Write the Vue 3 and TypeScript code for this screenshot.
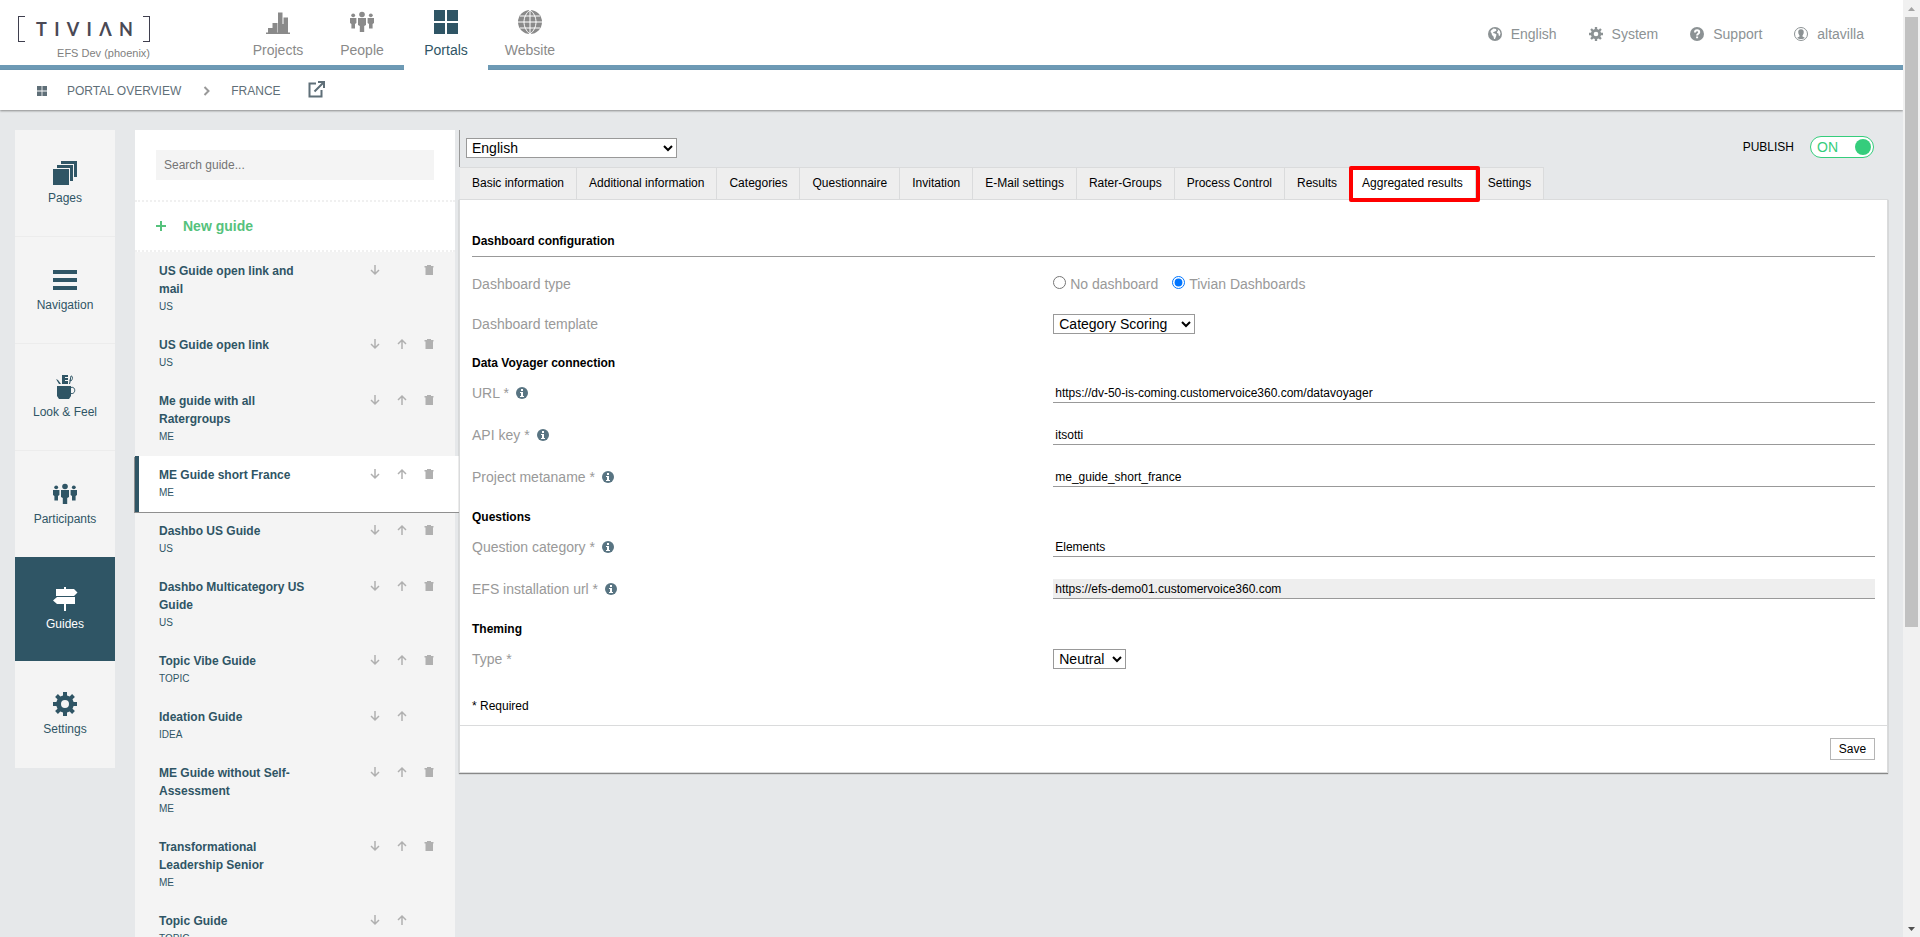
<script setup lang="ts">
import { ref } from 'vue'

interface Guide {
  title: string
  kind: string
  up: boolean
  remove: boolean
}

const mainNav = ['Projects', 'People', 'Portals', 'Website']
const sideNav = ['Pages', 'Navigation', 'Look & Feel', 'Participants', 'Guides', 'Settings']
const userNav = ['English', 'System', 'Support', 'altavilla']
const tabs = [
  'Basic information', 'Additional information', 'Categories', 'Questionnaire', 'Invitation',
  'E-Mail settings', 'Rater-Groups', 'Process Control', 'Results', 'Aggregated results', 'Settings',
]
const logoLetters = ['T', 'I', 'V', 'I', 'Λ', 'N']

const guides: Guide[] = [
  { title: 'US Guide open link and mail', kind: 'US', up: false, remove: true },
  { title: 'US Guide open link', kind: 'US', up: true, remove: true },
  { title: 'Me guide with all Ratergroups', kind: 'ME', up: true, remove: true },
  { title: 'ME Guide short France', kind: 'ME', up: true, remove: true },
  { title: 'Dashbo US Guide', kind: 'US', up: true, remove: true },
  { title: 'Dashbo Multicategory US Guide', kind: 'US', up: true, remove: true },
  { title: 'Topic Vibe Guide', kind: 'TOPIC', up: true, remove: true },
  { title: 'Ideation Guide', kind: 'IDEA', up: true, remove: false },
  { title: 'ME Guide without Self-Assessment', kind: 'ME', up: true, remove: true },
  { title: 'Transformational Leadership Senior', kind: 'ME', up: true, remove: true },
  { title: 'Topic Guide', kind: 'TOPIC', up: true, remove: false },
]

const activeGuide = ref(3)
const activeTab = ref('Aggregated results')
const search = ref('')
const published = ref(true)
const language = ref('English')
const dashboardType = ref('tivian')
const template = ref('Category Scoring')
const theme = ref('Neutral')

const connection = ref([
  { id: 'url', label: 'URL *', value: 'https://dv-50-is-coming.customervoice360.com/datavoyager', locked: false },
  { id: 'api-key', label: 'API key *', value: 'itsotti', locked: false },
  { id: 'metaname', label: 'Project metaname *', value: 'me_guide_short_france', locked: false },
])
const questions = ref([
  { id: 'category', label: 'Question category *', value: 'Elements', locked: false },
  { id: 'efs-url', label: 'EFS installation url *', value: 'https://efs-demo01.customervoice360.com', locked: true },
])
</script>

<template>
  <div class="window">
    <svg class="symbols" aria-hidden="true">
      <symbol id="people" viewBox="0 0 24 24">
        <circle cx="12" cy="4.500" r="2.800" />
        <path d="M8 8h8v7l-1.800 1v6H9.800v-6L8 15z" />
        <circle cx="3.200" cy="5.300" r="1.900" />
        <path d="M0 8h6.400v5l-1.400 1v4.500H1.400V14L0 13z" />
        <circle cx="20.800" cy="5.300" r="1.900" />
        <path d="M17.600 8H24v5l-1.400 1v4.500H19V14l-1.400-1z" />
      </symbol>
      <symbol id="gear" viewBox="0 0 24 24">
        <path fill-rule="evenodd" d="M10 0h4v3.400l2.700 1.100 2.400-2.400 2.800 2.800-2.400 2.400L20.600 10H24v4h-3.400l-1.100 2.700 2.400 2.400-2.800 2.800-2.400-2.400-2.700 1.100V24h-4v-3.400l-2.700-1.100-2.400 2.400-2.800-2.800 2.400-2.400L3.400 14H0v-4h3.400l1.100-2.700-2.400-2.400 2.800-2.800 2.400 2.400L10 3.400zM12 8a4 4 0 1 0 0 8 4 4 0 0 0 0-8z" />
      </symbol>
      <symbol id="tiles" viewBox="0 0 24 24">
        <path d="M0 0h11v11H0zM13 0h11v11H13zM0 13h11v11H0zM13 13h11v11H13z" />
      </symbol>
    </svg>

    <div class="page">
      <header class="top">
        <div class="brand">
          <div class="logo" aria-label="TIVIAN">
            <span v-for="(letter, i) in logoLetters" :key="i">{{ letter }}</span>
          </div>
          <div class="instance">EFS Dev (phoenix)</div>
        </div>
        <nav class="main-nav">
          <a v-for="item in mainNav" :key="item" href="#" :class="{ current: item === 'Portals' }">
            <svg v-if="item === 'Projects'" viewBox="0 0 24 24">
              <path d="M0 22.500h24V24H0zM2 18h4.500v5H2zM6.500 13h5v10h-5zM12 2.500h4.500V23H12zM17.500 7.500h4.500V23h-4.500zM16 14h2v9h-2z" />
            </svg>
            <svg v-else-if="item === 'People'" viewBox="0 0 24 24"><use href="#people" /></svg>
            <svg v-else-if="item === 'Portals'" viewBox="0 0 24 24"><use href="#tiles" /></svg>
            <svg v-else viewBox="0 0 24 24">
              <circle cx="12" cy="12" r="12" />
              <path class="lines" d="M12 0v24M0 12h24M2 6h20M2 18h20M12 0C4 6 4 18 12 24M12 0c8 6 8 18 0 24" />
            </svg>
            <span>{{ item }}</span>
          </a>
        </nav>
        <nav class="user-nav">
          <a v-for="item in userNav" :key="item" href="#">
            <svg v-if="item === 'English'" viewBox="0 0 14 14">
              <circle cx="7" cy="7" r="7" />
              <path class="cut" d="M3 3.500l2.500-2 2.500.500.500 1.500L7 4.500 5.500 5l-.500 1 2 .500 1.500 1-.500 2-1 2.500H6L5.500 9.500 4 8 3.500 6 2.500 5zM9.500 2l2.200 1.800.800 2.700-.800 2.500-1-.500-.200-2L9 6l.300-1.500.900-1z" />
            </svg>
            <svg v-else-if="item === 'System'" viewBox="0 0 24 24"><use href="#gear" /></svg>
            <svg v-else-if="item === 'Support'" viewBox="0 0 14 14">
              <circle cx="7" cy="7" r="7" />
              <path class="mark" d="M5 5.400C5 2.600 9.200 2.800 9.200 5.200 9.200 6.800 7.100 6.700 7.100 8.500M7.100 9.600v1.600" />
            </svg>
            <svg v-else viewBox="0 0 14 14">
              <circle class="ring" cx="7" cy="7" r="6.500" />
              <path d="M7 2.200c2.200 0 3 1.500 2.700 3.500C9.500 7 9 7.800 8.500 8.500v1l2.300 1.200C9.500 12.500 4.500 12.500 3.200 10.700l2.300-1.200v-1C5 7.800 4.500 7 4.300 5.700 4 3.700 4.800 2.200 7 2.200z" />
            </svg>
            <span>{{ item }}</span>
          </a>
        </nav>
      </header>

      <nav class="crumbs" aria-label="Breadcrumb">
        <svg class="crumb-tiles" viewBox="0 0 24 24"><use href="#tiles" /></svg>
        <a class="overview" href="#">PORTAL OVERVIEW</a>
        <svg class="chevron" viewBox="0 0 8 10"><path d="M1.500 1l4 4-4 4" /></svg>
        <a class="portal" href="#">FRANCE</a>
        <a class="external" href="#" aria-label="Open portal">
          <svg viewBox="0 0 17 17"><path d="M8 2.500H1.500v13h12V9M10 1h6v6M16 1L6.500 10.500" /></svg>
        </a>
      </nav>

      <div class="workspace">
        <nav class="side">
          <a v-for="item in sideNav" :key="item" href="#" :class="{ current: item === 'Guides' }">
            <svg v-if="item === 'Pages'" viewBox="0 0 24 24">
              <path d="M0 8h16v16H0zM4 4h16v16h-3V7H4zM8 0h16v16h-3V3H8z" />
            </svg>
            <svg v-else-if="item === 'Navigation'" viewBox="0 0 24 24">
              <path d="M0 2h24v4H0zM0 10h24v4H0zM0 18h24v4H0z" />
            </svg>
            <svg v-else-if="item === 'Look & Feel'" viewBox="0 0 24 24">
              <path d="M4 11h14v10l-2 3H6l-2-3zM9 0h6v2h-3v1h3v2h-3v1h3v3H9zM3 4l2 1 3 4H6zM16 9l1-5 1 1-1 4z" />
              <path class="thin" d="M18 12.500c5-1.500 5 7 0 6M17 6l1-5c2 0 2 3 0 5" />
            </svg>
            <svg v-else-if="item === 'Participants'" viewBox="0 0 24 24"><use href="#people" /></svg>
            <svg v-else-if="item === 'Guides'" viewBox="0 0 24 24">
              <path d="M11 0h2v2h8l3.500 3.500L21 9H3V2h8zM4 10h18v7H4L0 13.500zM11 17h2v7h-2z" />
            </svg>
            <svg v-else viewBox="0 0 24 24"><use href="#gear" /></svg>
            <span>{{ item }}</span>
          </a>
        </nav>

        <aside class="guides">
          <div class="search">
            <input v-model="search" type="text" placeholder="Search guide..." aria-label="Search guide" />
          </div>
          <button class="new-guide" type="button">
            <svg viewBox="0 0 10 10"><path d="M4 0h2v4h4v2H6v4H4V6H0V4h4z" /></svg>
            <span>New guide</span>
          </button>
          <ul>
            <li v-for="(guide, i) in guides" :key="guide.title" :class="{ active: i === activeGuide }">
              <a class="guide-link" href="#" @click.prevent="activeGuide = i">
                <strong>{{ guide.title }}</strong>
                <small>{{ guide.kind }}</small>
              </a>
              <div class="actions">
                <button type="button" aria-label="Move down">
                  <svg viewBox="0 0 10 10"><path class="arrow" d="M5 0v9M1 5l4 4 4-4" /></svg>
                </button>
                <button v-if="guide.up" type="button" aria-label="Move up">
                  <svg viewBox="0 0 10 10"><path class="arrow" d="M5 10V1M1 5l4-4 4 4" /></svg>
                </button>
                <button v-if="guide.remove" class="trash" type="button" aria-label="Delete">
                  <svg viewBox="0 0 10 10"><path d="M3 0h4v1h2.500v1.500H9V10H1.500V2.500H.500V1H3z" /></svg>
                </button>
              </div>
            </li>
          </ul>
        </aside>

        <main>
          <div class="toolbar">
            <select v-model="language" class="language" aria-label="Language">
              <option>English</option>
            </select>
            <label class="publish">
              <span>PUBLISH</span>
              <span class="toggle">
                <span>ON</span>
                <input v-model="published" type="checkbox" role="switch" />
              </span>
            </label>
          </div>
          <nav class="tabs">
            <button
              v-for="tab in tabs" :key="tab" type="button"
              :class="{ selected: tab === activeTab }" @click="activeTab = tab"
            >{{ tab }}</button>
          </nav>

          <form class="panel" @submit.prevent>
            <div class="fields">
              <h1>Dashboard configuration</h1>
              <div class="row choice">
                <span>Dashboard type</span>
                <div class="radios">
                  <label><input v-model="dashboardType" type="radio" name="type" value="none" />No dashboard</label>
                  <label><input v-model="dashboardType" type="radio" name="type" value="tivian" />Tivian Dashboards</label>
                </div>
              </div>
              <div class="row choice">
                <label for="template">Dashboard template</label>
                <select id="template" v-model="template" class="template"><option>Category Scoring</option></select>
              </div>
              <h2>Data Voyager connection</h2>
              <div v-for="field in connection" :key="field.id" class="row">
                <label :for="field.id">{{ field.label }}
                  <svg class="info" viewBox="0 0 12 12"><circle cx="6" cy="6" r="6" /><path d="M5 2h2v2H5zM4 5h3v4h1v1H4V9h1V6H4z" /></svg>
                </label>
                <input :id="field.id" v-model="field.value" type="text" />
              </div>
              <h2>Questions</h2>
              <div v-for="field in questions" :key="field.id" class="row">
                <label :for="field.id">{{ field.label }}
                  <svg class="info" viewBox="0 0 12 12"><circle cx="6" cy="6" r="6" /><path d="M5 2h2v2H5zM4 5h3v4h1v1H4V9h1V6H4z" /></svg>
                </label>
                <input :id="field.id" v-model="field.value" type="text" :readonly="field.locked" />
              </div>
              <h2>Theming</h2>
              <div class="row">
                <label for="theme">Type *</label>
                <select id="theme" v-model="theme" class="theme"><option>Neutral</option></select>
              </div>
              <p class="required">* Required</p>
            </div>
            <footer><button type="submit">Save</button></footer>
          </form>
        </main>
      </div>
    </div>

    <div class="scrollbar" aria-hidden="true">
      <svg class="up" viewBox="0 0 17 17"><path d="M5 11l3.500-4 3.500 4z" /></svg>
      <div class="track"><div class="thumb"></div></div>
      <svg class="down" viewBox="0 0 17 17"><path d="M5 7h7l-3.500 4z" /></svg>
    </div>
  </div>
</template>

<style>
body {
  margin: 0;
  background: #e6e8ea;
}
</style>

<style scoped>
* {
  box-sizing: border-box;
}
.window {
  display: flex;
  height: 100vh;
  overflow: hidden;
  font-family: "Liberation Sans", Arial, sans-serif;
  font-size: 12px;
  line-height: 16px;
  color: #000;
  background: #e6e8ea;
}
.symbols {
  position: absolute;
  width: 0;
  height: 0;
}
svg {
  display: block;
  flex: none;
  fill: currentColor;
  overflow: visible;
}
a {
  color: inherit;
  text-decoration: none;
}
button,
input,
select {
  margin: 0;
  font: inherit;
  color: inherit;
}
button {
  padding: 0;
  border: 0;
  background: none;
}
.page {
  flex: 1;
  min-width: 0;
}

/* Header */
.top {
  display: flex;
  height: 70px;
  background: linear-gradient(#6d9ab5, #6d9ab5) bottom / 100% 5px no-repeat #fff;
}
.brand {
  width: 132px;
  margin: 16px 86px 0 18px;
}
.logo {
  display: flex;
  justify-content: space-between;
  height: 26px;
  padding: 0 16px 0 17px;
  font-family: Lato, sans-serif;
  font-size: 18px;
  font-weight: bold;
  line-height: 26px;
  color: #4a4955;
  border: 1px solid #3f3f4e;
  border-width: 0 1px;
  background:
    linear-gradient(#3f3f4e, #3f3f4e) left top / 6px 1px no-repeat,
    linear-gradient(#3f3f4e, #3f3f4e) left bottom / 6px 1px no-repeat,
    linear-gradient(#3f3f4e, #3f3f4e) right top / 6px 1px no-repeat,
    linear-gradient(#3f3f4e, #3f3f4e) right bottom / 6px 1px no-repeat;
}
.instance {
  padding-top: 3px;
  font-size: 11px;
  text-align: right;
  color: #808080;
}
.main-nav {
  display: flex;
  font-size: 14px;
  color: #8a8a8a;
}
.main-nav a {
  display: flex;
  flex-direction: column;
  align-items: center;
  gap: 8px;
  width: 84px;
  height: 70px;
  padding-top: 10px;
}
.main-nav a.current {
  color: #2f5565;
  background: #fff;
}
.main-nav svg {
  width: 24px;
  height: 24px;
}
.lines {
  fill: none;
  stroke: #fff;
  stroke-width: 1;
}
.user-nav {
  display: flex;
  gap: 32px;
  height: 68px;
  margin-left: auto;
  padding-right: 39px;
  font-size: 14px;
  color: #8c9294;
}
.user-nav a {
  display: flex;
  align-items: center;
  gap: 9px;
}
.user-nav svg {
  width: 14px;
  height: 14px;
}
.cut {
  fill: #fff;
}
.mark {
  fill: none;
  stroke: #fff;
  stroke-width: 2;
}
.ring {
  fill: none;
  stroke: currentColor;
}

/* Breadcrumb */
.crumbs {
  display: flex;
  align-items: center;
  height: 40px;
  padding: 1px 0 0 37px;
  color: #5f6f78;
  background: #fff;
  box-shadow: 0 1px 2px rgba(0, 0, 0, 0.4);
}
.crumb-tiles {
  width: 10px;
  height: 10px;
  margin-right: 20px;
}
.chevron {
  width: 8px;
  height: 10px;
  margin: 0 20px 0 22px;
  fill: none;
  stroke: #999;
  stroke-width: 2;
}
.external {
  margin: 0 0 3px 27px;
}
.external svg {
  width: 17px;
  height: 17px;
  fill: none;
  stroke: currentColor;
  stroke-width: 2;
}

/* Workspace */
.workspace {
  display: flex;
  align-items: flex-start;
  padding: 20px 15px 0;
}
.side {
  flex: none;
  width: 100px;
  margin-right: 20px;
  color: #2f5565;
  background: #f4f4f4;
}
.side a {
  display: flex;
  flex-direction: column;
  align-items: center;
  gap: 5px;
  height: 107px;
  padding-top: 31px;
}
.side a:nth-child(-n + 3) {
  border-bottom: 1px solid #ececec;
}
.side a:nth-child(4) {
  height: 106px;
}
.side a.current {
  height: 104px;
  padding-top: 30px;
  color: #fff;
  background: #2f5565;
}
.side svg {
  width: 24px;
  height: 24px;
}
.thin {
  fill: none;
  stroke: currentColor;
}
.guides {
  flex: none;
  width: 320px;
  color: #2f5565;
  background: #f4f4f4;
}
.search {
  padding: 20px 21px;
  background: #fff;
  border-bottom: 2px dotted #f0f0f0;
}
.search input {
  display: block;
  width: 100%;
  height: 30px;
  padding: 0 8px;
  border: 0;
  background: #f4f4f4;
}
.search input::placeholder {
  color: #757575;
}
.new-guide {
  display: flex;
  align-items: center;
  gap: 17px;
  width: 100%;
  height: 50px;
  padding-left: 21px;
  font-size: 14px;
  font-weight: bold;
  color: #55c27c;
  background: #fff;
  border-bottom: 2px dotted #f0f0f0;
}
.new-guide svg {
  width: 10px;
  height: 10px;
}
.guides ul {
  margin: 0;
  padding: 0;
  list-style: none;
}
.guides li {
  display: flex;
  justify-content: space-between;
  padding: 10px 21px 10px 24px;
}
.guides li.active {
  width: 325px;
  padding: 10px 26px 10px 20px;
  border-left: 4px solid #2f5565;
  background: #fff;
  box-shadow: -1px 1px 0 #8f8f8f;
}
.guide-link {
  width: 155px;
}
.guide-link strong,
.guide-link small {
  display: block;
  line-height: 18px;
}
.guide-link small {
  font-size: 10px;
}
.actions {
  display: grid;
  grid-template-columns: 10px 10px 10px;
  gap: 17px;
  align-content: start;
  padding-top: 3px;
  color: #b0b0b0;
}
.actions svg {
  width: 10px;
  height: 10px;
}
.trash {
  grid-column: 3;
}
.arrow {
  fill: none;
  stroke: currentColor;
  stroke-width: 1.5;
}

/* Main area */
main {
  flex: 1;
  min-width: 0;
  margin-left: 4px;
}
.toolbar {
  display: flex;
  justify-content: space-between;
  align-items: flex-start;
  height: 37px;
  padding: 6px 14px 0 6px;
  border-left: 1px solid #999;
}
select {
  height: 20px;
  padding: 0 1px;
  font-size: 14px;
  color: #000;
  background: #fff;
  border: 1px solid #999;
  border-radius: 0;
}
.language {
  width: 211px;
  margin-top: 2px;
}
.template {
  width: 142px;
}
.theme {
  width: 73px;
}
.publish {
  display: flex;
  align-items: center;
  gap: 16px;
}
.toggle {
  display: flex;
  align-items: center;
  justify-content: space-between;
  width: 64px;
  height: 22px;
  padding: 0 2px 0 6px;
  font-size: 14px;
  color: #35cd7c;
  background: #fff;
  border: 1px solid #35cd7c;
  border-radius: 11px;
}
.toggle input {
  appearance: none;
  width: 16px;
  height: 16px;
  border-radius: 8px;
  background: #35cd7c;
}
.tabs {
  display: flex;
  margin-left: 1px;
}
.tabs button {
  position: relative;
  height: 32px;
  padding: 0 12px 2px;
  white-space: nowrap;
  color: #000;
  background: #eee;
  border-top: 1px solid #dadbdc;
  border-right: 1px solid #dadbdc;
}
.tabs button.selected {
  z-index: 1;
  background: #fff;
}
.tabs button.selected::after {
  content: "";
  position: absolute;
  inset: -2px -5px -3px -1px;
  border: 4px solid #f00;
  border-radius: 2px;
}
.panel {
  background: #fff;
  border: 1px solid #dadbdc;
  box-shadow: 0 1px 1px #888;
}
.fields {
  padding: 33px 12px 7px;
}
h1,
h2 {
  margin: 0;
  font-size: 12px;
  line-height: 16px;
}
h1 {
  margin-bottom: 7px;
  padding-bottom: 7px;
  border-bottom: 1px solid #999;
}
h2 {
  padding: 11px 0 1px;
}
.row {
  display: grid;
  grid-template-columns: 29fr 41fr;
  align-items: center;
  height: 42px;
  font-size: 14px;
  color: #999;
}
.row.choice {
  height: 40px;
}
.row > label {
  display: flex;
  align-items: center;
  gap: 7px;
}
.row select {
  justify-self: start;
}
.row > input {
  height: 20px;
  padding: 0 2px;
  font-size: 12px;
  color: #000;
  background: #fff;
  border: 0;
  border-bottom: 1px solid #999;
  border-radius: 0;
}
.row > input[readonly] {
  background: #eee;
}
.radios {
  display: flex;
  gap: 14px;
}
.radios label {
  display: flex;
  gap: 4px;
}
.radios input {
  width: 13px;
  height: 13px;
}
.info {
  width: 12px;
  height: 12px;
  color: #587482;
}
.info path {
  fill: #fff;
}
.required {
  margin: 18px 0 4px;
}
footer {
  display: flex;
  justify-content: flex-end;
  padding: 12px;
  border-top: 1px solid #dadbdc;
}
footer button {
  width: 45px;
  height: 22px;
  color: #000;
  background: #fff;
  border: 1px solid #b5b5b5;
}

/* Scrollbar */
.scrollbar {
  display: flex;
  flex-direction: column;
  width: 17px;
  background: #f1f1f1;
}
.scrollbar svg {
  width: 17px;
  height: 17px;
}
.up {
  color: #a3a3a3;
}
.down {
  color: #505050;
}
.track {
  flex: 1;
  padding: 0 2px;
}
.thumb {
  height: 67.5%;
  background: #c1c1c1;
}
</style>
